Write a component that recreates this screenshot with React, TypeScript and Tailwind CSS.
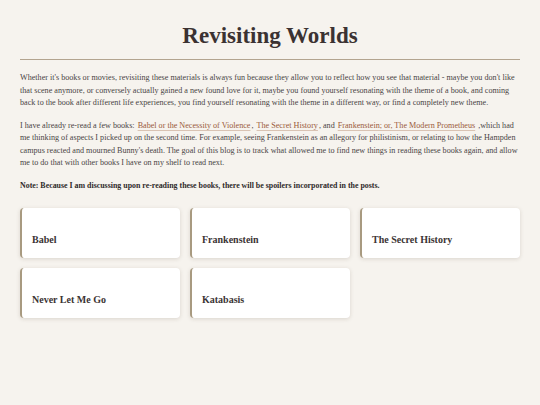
const books = ["Babel", "Frankenstein", "The Secret History", "Never Let Me Go", "Katabasis"]

function BookLink({ children }: { children: string }) {
  return (
    <a className="px-[1px] text-[#9a5a3a] underline decoration-[#d9c3b3] underline-offset-2">{children}</a>
  )
}

export default function App() {
  return (
    <div
      className="min-h-[405px] w-full bg-[#f6f3ee] text-[#4a4545]"
      style={{ fontFamily: '"Liberation Serif", "DejaVu Serif", serif' }}
    >
      <div className="px-5 pt-[22px]">
        <h1 className="text-center text-[23px] font-bold leading-[28px] text-[#3b3232]">Revisiting Worlds</h1>
        <div className="mt-[9px] h-px bg-[#b3a48f]" />

        <p className="mt-[12px] text-[8.15px] leading-[12.5px]">
          Whether it's books or movies, revisiting these materials is always fun because they allow you to reflect how you see that material - maybe you don't like that scene anymore, or conversely actually gained a new found love for it, maybe you found yourself resonating with the theme of a book, and coming back to the book after different life experiences, you find yourself resonating with the theme in a different way, or find a completely new theme.
        </p>

        <p className="mt-[10px] text-[8.15px] leading-[12.5px]">
          I have already re-read a few books: <BookLink>Babel or the Necessity of Violence</BookLink>,{" "}
          <BookLink>The Secret History</BookLink>, and <BookLink>Frankenstein; or, The Modern Prometheus</BookLink> ,which had me thinking of aspects I picked up on the second time. For example, seeing Frankenstein as an allegory for philistinism, or relating to how the Hampden campus reacted and mourned Bunny's death. The goal of this blog is to track what allowed me to find new things in reading these books again, and allow me to do that with other books I have on my shelf to read next.
        </p>

        <p className="mt-[11px] text-[7.9px] font-bold leading-[10px] text-[#2f2a2a]">
          Note: Because I am discussing upon re-reading these books, there will be spoilers incorporated in the posts.
        </p>

        <div className="mt-[17px] grid grid-cols-3 gap-[10px]">
          {books.map((b) => (
            <div
              key={b}
              className="flex h-[50px] items-end rounded-[4px] border-l-2 border-[#a89a80] bg-white px-[10px] pb-[12px] shadow-[0_1px_4px_rgba(60,40,20,0.15)]"
            >
              <span className="text-[10px] font-bold leading-[12px] text-[#3b3434]">{b}</span>
            </div>
          ))}
        </div>
      </div>
    </div>
  )
}
